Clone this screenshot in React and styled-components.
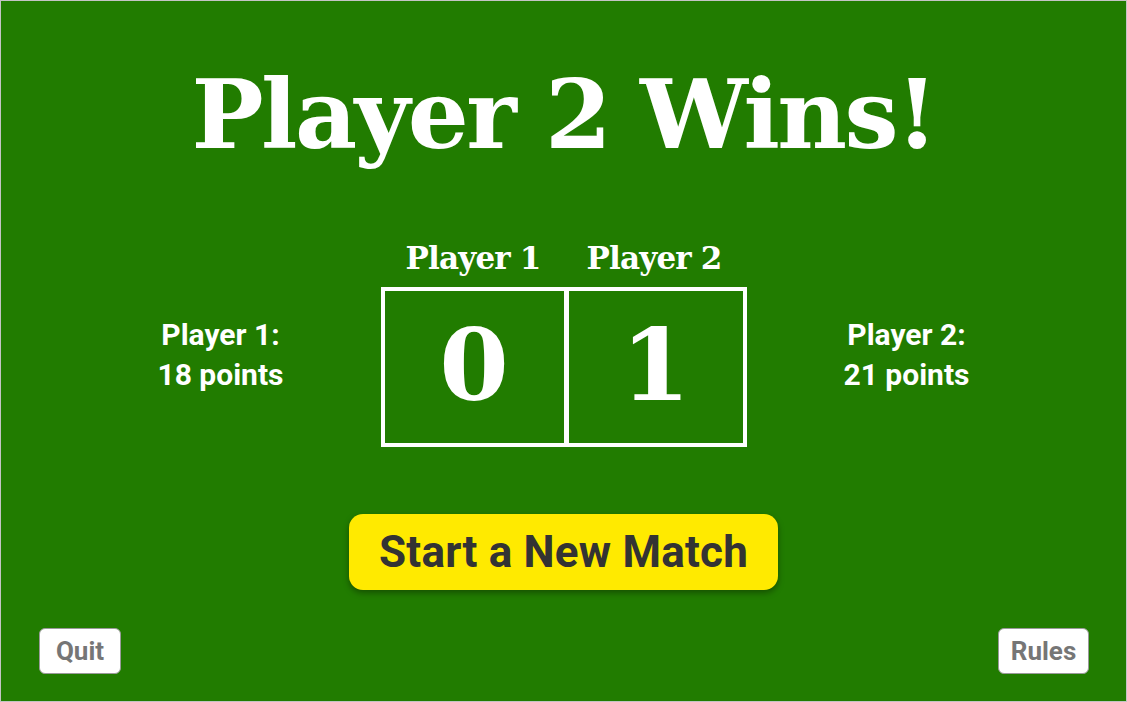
import React from 'react'
import styled, { createGlobalStyle } from 'styled-components'

const GlobalStyle = createGlobalStyle`
  html, body {
    margin: 0;
    padding: 0;
  }
  body {
    font-family: Roboto, "Noto Sans", sans-serif;
  }
`

const Table = styled.div`
  box-sizing: border-box;
  height: 100vh;
  background: #217c00;
  border: 1px solid #c4c4c4;
  display: flex;
  flex-direction: column;
  align-items: center;
  color: #fff;
`

const Title = styled.h1`
  margin: 58px 0 0;
  font-family: "DejaVu Serif", "Liberation Serif", serif;
  font-weight: 700;
  font-size: 96px;
  line-height: 112px;
  letter-spacing: -2.6px;
`

const ScoreRow = styled.div`
  margin-top: 58px;
  display: grid;
  grid-template-columns: 200px 366px 200px;
  column-gap: 60px;
  align-items: center;
`

const Points = styled.div`
  text-align: center;
  font-weight: 700;
  font-size: 30px;
  line-height: 40px;
  margin-top: 34px;
`

const Board = styled.div`
  display: flex;
  flex-direction: column;
`

const Names = styled.div`
  display: grid;
  grid-template-columns: 1fr 1fr;
  padding: 0 2px;
`

const Name = styled.div`
  text-align: center;
  font-family: "DejaVu Serif", "Liberation Serif", serif;
  font-weight: 700;
  font-size: 31px;
  line-height: 58px;
  letter-spacing: -0.8px;
`

const Cells = styled.div`
  display: grid;
  grid-template-columns: 1fr 1fr;
  border: 4px solid #fff;
  height: 160px;
  box-sizing: border-box;
`

const Cell = styled.div`
  display: flex;
  align-items: center;
  justify-content: center;
  font-family: "DejaVu Serif", "Liberation Serif", serif;
  font-weight: 700;
  font-size: 100px;
  padding-bottom: 4px;
  border-left: ${p => (p.divided ? '5px solid #fff' : 'none')};
`

const NewMatch = styled.button`
  margin-top: 67px;
  width: 429px;
  height: 76px;
  border: none;
  border-radius: 14px;
  background: #ffea00;
  color: #333;
  font-family: Roboto, "Noto Sans", sans-serif;
  font-weight: 700;
  font-size: 44px;
  letter-spacing: 0.2px;
  box-shadow: 0 3px 6px rgba(0, 0, 0, 0.35);
  cursor: pointer;
`

const Footer = styled.div`
  align-self: stretch;
  margin-top: auto;
  padding: 0 37px 27px 38px;
  display: flex;
  justify-content: space-between;
`

const SmallButton = styled.button`
  height: 46px;
  padding: 0 11px;
  min-width: ${p => p.wide || 82}px;
  border: 1px solid #9a9a9a;
  border-radius: 6px;
  background: #fff;
  color: #767676;
  font-family: Roboto, "Noto Sans", sans-serif;
  font-weight: 700;
  font-size: 26px;
  cursor: pointer;
`

export default function App() {
  return (
    <>
      <GlobalStyle />
      <Table>
        <Title>Player 2 Wins!</Title>
        <ScoreRow>
          <Points>
            Player 1:<br />18 points
          </Points>
          <Board>
            <Names>
              <Name>Player 1</Name>
              <Name>Player 2</Name>
            </Names>
            <Cells>
              <Cell>0</Cell>
              <Cell divided>1</Cell>
            </Cells>
          </Board>
          <Points>
            Player 2:<br />21 points
          </Points>
        </ScoreRow>
        <NewMatch>Start a New Match</NewMatch>
        <Footer>
          <SmallButton>Quit</SmallButton>
          <SmallButton wide={91}>Rules</SmallButton>
        </Footer>
      </Table>
    </>
  )
}
